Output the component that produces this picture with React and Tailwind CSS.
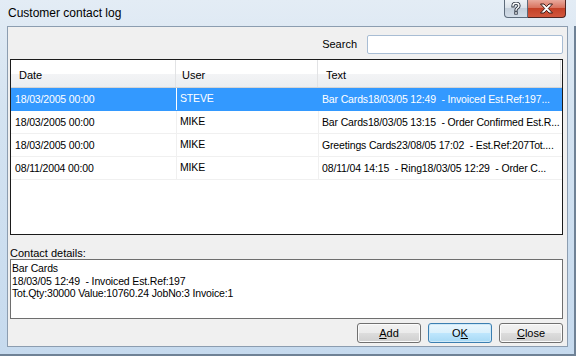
import React from "react";

const rows = [
  { date: "18/03/2005 00:00", user: "STEVE", text: "Bar Cards18/03/05 12:49  - Invoiced Est.Ref:197...", sel: true },
  { date: "18/03/2005 00:00", user: "MIKE", text: "Bar Cards18/03/05 13:15  - Order Confirmed Est.R..." },
  { date: "18/03/2005 00:00", user: "MIKE", text: "Greetings Cards23/08/05 17:02  - Est.Ref:207Tot...." },
  { date: "08/11/2004 00:00", user: "MIKE", text: "08/11/04 14:15  - Ring18/03/05 12:29  - Order C..." },
];

function Btn({ children, def }) {
  return (
    <div
      className={
        "w-[64px] h-[20px] rounded-[3px] border flex items-center justify-center text-[11px] text-black " +
        (def
          ? "border-[#3c7fb1] bg-[linear-gradient(#eaf6fd_0%,#d9f0fc_50%,#bee6fd_51%,#a7d9f5_100%)] shadow-[inset_0_0_0_1px_#cfe9f8]"
          : "border-[#707070] bg-[linear-gradient(#f2f2f2_0%,#ebebeb_50%,#dddddd_51%,#cfcfcf_100%)] shadow-[inset_0_0_0_1px_#fbfbfb]")
      }
    >
      {children}
    </div>
  );
}

export default function App() {
  return (
    <div
      className="w-[576px] h-[356px] overflow-hidden flex flex-col bg-[linear-gradient(180deg,#e3ecf5_0%,#d4e3f1_30%,#c6daee_100%)]"
      style={{ fontFamily: '"Liberation Sans", Arial, sans-serif' }}
    >
      {/* title bar */}
      <div className="h-[26px] flex items-start justify-between shrink-0">
        <div className="pl-[8px] pt-[5px] text-[12px] leading-[16px] text-black">
          Customer contact log
        </div>
        <div className="flex mr-[10px]">
          <div className="w-[24px] h-[18px] rounded-bl-[4px] border border-t-0 border-[#5d6b7b] bg-[linear-gradient(#eef2f6_0%,#dbe2ea_45%,#c4cfdb_50%,#d3dde8_100%)] flex items-center justify-center">
            <svg width="10" height="13" viewBox="0 0 10 13">
              <path d="M2 3.8C2 2.2 3.3 1.3 5 1.3s3 .9 3 2.4c0 1.3-.9 1.8-1.6 2.3C5.6 6.5 5 6.9 5 8" fill="none" stroke="#2b3340" strokeWidth="3.2" strokeLinecap="square" />
              <rect x="3.3" y="9.4" width="3.4" height="3.2" fill="#2b3340" />
              <path d="M2 3.8C2 2.2 3.3 1.3 5 1.3s3 .9 3 2.4c0 1.3-.9 1.8-1.6 2.3C5.6 6.5 5 6.9 5 8" fill="none" stroke="#fff" strokeWidth="1.4" strokeLinecap="square" />
              <rect x="4.2" y="10.2" width="1.6" height="1.6" fill="#fff" />
            </svg>
          </div>
          <div className="w-[38px] h-[18px] rounded-br-[4px] border border-t-0 border-l-0 border-[#4f2521] bg-[linear-gradient(#e9a99c_0%,#d9735f_45%,#c44127_50%,#d2573d_100%)] flex items-center justify-center">
            <svg width="15" height="11" viewBox="0 0 15 11">
              <path d="M1.5 1h3.5l2.5 2.7L10 1h3.5l-4.2 4.5 4.2 4.5H10L7.5 7.3 5 10H1.5l4.2-4.5z" fill="#fff" stroke="#3a1a16" strokeWidth="1" strokeLinejoin="round" />
            </svg>
          </div>
        </div>
      </div>

      {/* body */}
      <div className="flex flex-1">
        <div className="w-[7px]" />
        <div className="w-[561px] h-[321px] border border-[#8c9db0] bg-[#f0f0f0] flex flex-col pl-[2px] pr-[4px] text-[10.5px] tracking-[-0.15px]">
          {/* search row */}
          <div className="flex items-center justify-end mt-[8px] h-[19px] text-[11px] tracking-normal text-black">
            <span className="mr-[10px]">Search</span>
            <div className="w-[196px] h-[19px] rounded-[2px] border border-[#a8bdd4] bg-white" />
          </div>

          {/* list */}
          <div className="mt-[5px] h-[176px] border border-[#1b1b1b] bg-white flex flex-col">
            <div className="h-[28px] flex border-b border-[#d5d5d5] bg-[linear-gradient(#ffffff_0%,#ffffff_50%,#f3f4f6_51%,#eceef0_100%)] text-black text-[11px] tracking-normal">
              <div className="w-[165px] border-r border-[#e2e3e5] flex items-center pl-[8px] pt-[3px]">Date</div>
              <div className="w-[142px] border-r border-[#e2e3e5] flex items-center pl-[6px] pt-[3px]">User</div>
              <div className="w-[243px] border-r border-[#e2e3e5] flex items-center pl-[8px] pt-[3px]">Text</div>
            </div>
            {rows.map((r, i) => (
              <div
                key={i}
                className={
                  "h-[23px] flex border-b " +
                  (r.sel ? "bg-[#3399ff] text-white border-[#3399ff]" : "text-black border-[#f0f0f0]")
                }
              >
                <div className="w-[165px] flex items-center pl-[4px] pt-[1px] whitespace-nowrap">{r.date}</div>
                <div className={"w-[142px] flex items-start pl-[3px] pt-[3px] border-l " + (r.sel ? "border-white" : "border-[#f0f0f0]")}>{r.user}</div>
                <div className={"flex-1 flex items-center pl-[3px] pt-[1px] whitespace-pre overflow-hidden border-l " + (r.sel ? "border-[#3399ff]" : "border-[#f0f0f0]")}>{r.text}</div>
              </div>
            ))}
            <div className="flex-1" />
          </div>

          {/* contact details */}
          <div className="mt-[12px] text-[11px] tracking-normal leading-[12px] text-black">Contact details:</div>
          <div className="h-[60px] border border-[#6e6e6e] bg-white pl-[1px] pt-[2px] leading-[12.5px] text-black whitespace-pre">
            <div>Bar Cards</div>
            <div>18/03/05 12:49  - Invoiced Est.Ref:197</div>
            <div>Tot.Qty:30000 Value:10760.24 JobNo:3 Invoice:1</div>
          </div>

          {/* buttons */}
          <div className="mt-[4px] flex justify-end gap-[7px] tracking-normal">
            <Btn><span className="underline">A</span>dd</Btn>
            <Btn def>O<span className="underline">K</span></Btn>
            <Btn><span className="underline">C</span>lose</Btn>
          </div>
        </div>
        <div className="w-[8px] flex justify-end">
          <div className="w-[2px] h-full bg-[#6f8296]" />
        </div>
      </div>
      <div className="h-[2px] bg-[#6f8296]" />
    </div>
  );
}
